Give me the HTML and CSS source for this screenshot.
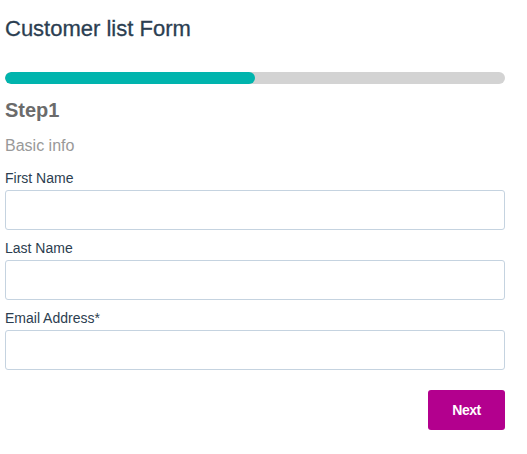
FILE: index.html
```html
<!DOCTYPE html>
<html>
<head>
<meta charset="utf-8">
<link rel="stylesheet" href="styles.css">
</head>
<body>
<div class="wrap">
  <h1 class="title">Customer list Form</h1>
  <div class="progress"><div class="progress-fill" style="width:50%"></div></div>
  <h2 class="step">Step1</h2>
  <p class="sub">Basic info</p>
  <div class="field">
    <label class="label">First Name</label>
    <input class="input" type="text">
  </div>
  <div class="field">
    <label class="label">Last Name</label>
    <input class="input" type="text">
  </div>
  <div class="field">
    <label class="label">Email Address*</label>
    <input class="input" type="text">
  </div>
  <div class="actions">
    <button class="btn">Next</button>
  </div>
</div>
</body>
</html>
```
FILE: styles.css
```css
* { box-sizing: border-box; }
body {
  margin: 0;
  font-family: "Liberation Sans", Arial, sans-serif;
  background: #fff;
}
.wrap {
  width: 510px;
  padding: 16px 5px 0 5px;
  display: flex;
  flex-direction: column;
}
.title {
  margin: 0;
  font-size: 22px;
  line-height: 26px;
  font-weight: normal;
  color: #2b3e51;
  -webkit-text-stroke: 0.3px #2b3e51;
}
.progress {
  margin-top: 30px;
  height: 12px;
  background: #d3d3d3;
  border-radius: 6px;
  overflow: hidden;
}
.progress-fill {
  height: 100%;
  background: #00b4ad;
  border-radius: 6px;
}
.step {
  margin: 14px 0 0 0;
  font-size: 20px;
  line-height: 24px;
  font-weight: bold;
  color: #6b6b6b;
}
.sub {
  margin: 14px 0 0 0;
  font-size: 16px;
  line-height: 20px;
  color: #999;
}
.field {
  display: flex;
  flex-direction: column;
  margin-top: 13px;
}
.field + .field { margin-top: 9px; }
.label {
  font-size: 14px;
  line-height: 18px;
  color: #2c3e50;
  margin-bottom: 3px;
}
.input {
  height: 40px;
  border: 1px solid #c5d3e0;
  border-radius: 3px;
  background: #fff;
  font-family: inherit;
  font-size: 14px;
  padding: 0 10px;
}
.actions {
  display: flex;
  justify-content: flex-end;
  margin-top: 20px;
}
.btn {
  width: 77px;
  height: 40px;
  background: #b3008e;
  color: #fff;
  border: none;
  border-radius: 3px;
  font-family: inherit;
  font-weight: bold;
  font-size: 14px;
  letter-spacing: -0.5px;
}
```
